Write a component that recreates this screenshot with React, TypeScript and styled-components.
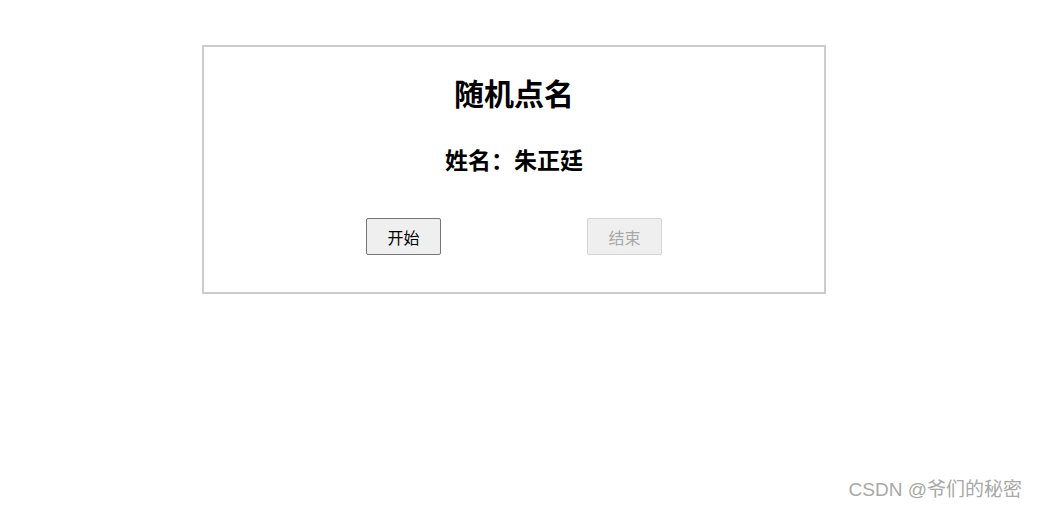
import React from 'react';
import styled, { createGlobalStyle } from 'styled-components';

const GlobalStyle = createGlobalStyle`
    html, body {
        margin: 0;
        padding: 0;
        background: #ffffff;
    }
    body {
        width: 1037px;
        height: 509px;
        overflow: hidden;
        font-family: "Noto Sans CJK SC", "Liberation Sans", sans-serif;
        color: #000;
    }
`;

const Page = styled.div`
    position: relative;
    width: 1037px;
    height: 509px;
    padding-top: 45px;
    box-sizing: border-box;
`;

const Card = styled.div`
    width: 624px;
    margin-left: 202px;
    box-sizing: border-box;
    border: 2px solid #cccccc;
    padding: 25px 0 37px;
    display: flex;
    flex-direction: column;
    align-items: center;
`;

const Title = styled.h2`
    margin: 0;
    font-size: 30px;
    line-height: 40px;
    font-weight: bold;
`;

const Name = styled.div`
    margin-top: 31px;
    font-size: 23px;
    line-height: 32px;
    font-weight: bold;
`;

const Buttons = styled.div`
    margin-top: 43px;
    display: flex;
    justify-content: center;
    gap: 146px;
`;

const Button = styled.button`
    width: 75px;
    height: 37px;
    box-sizing: border-box;
    padding: 0;
    font-family: "Noto Sans CJK SC", "Liberation Sans", sans-serif;
    font-size: 16px;
    border-radius: 2px;
    border: 1px solid #767676;
    background: #efefef;
    color: #000;

    &:disabled {
        border-color: #d4d4d4;
        background: #efefef;
        color: #a8a8a8;
    }
`;

const Watermark = styled.div`
    position: absolute;
    right: 15px;
    top: 477px;
    font-family: "Liberation Sans", "Noto Sans CJK SC", sans-serif;
    font-size: 19px;
    line-height: 26px;
    color: #a8a8a8;
`;

function App() {
    const name = '朱正廷';

    return (
        <Page>
            <GlobalStyle />
            <Card>
                <Title>随机点名</Title>
                <Name>姓名：{name}</Name>
                <Buttons>
                    <Button>开始</Button>
                    <Button disabled>结束</Button>
                </Buttons>
            </Card>
            <Watermark>CSDN @爷们的秘密</Watermark>
        </Page>
    );
}

export default App;
